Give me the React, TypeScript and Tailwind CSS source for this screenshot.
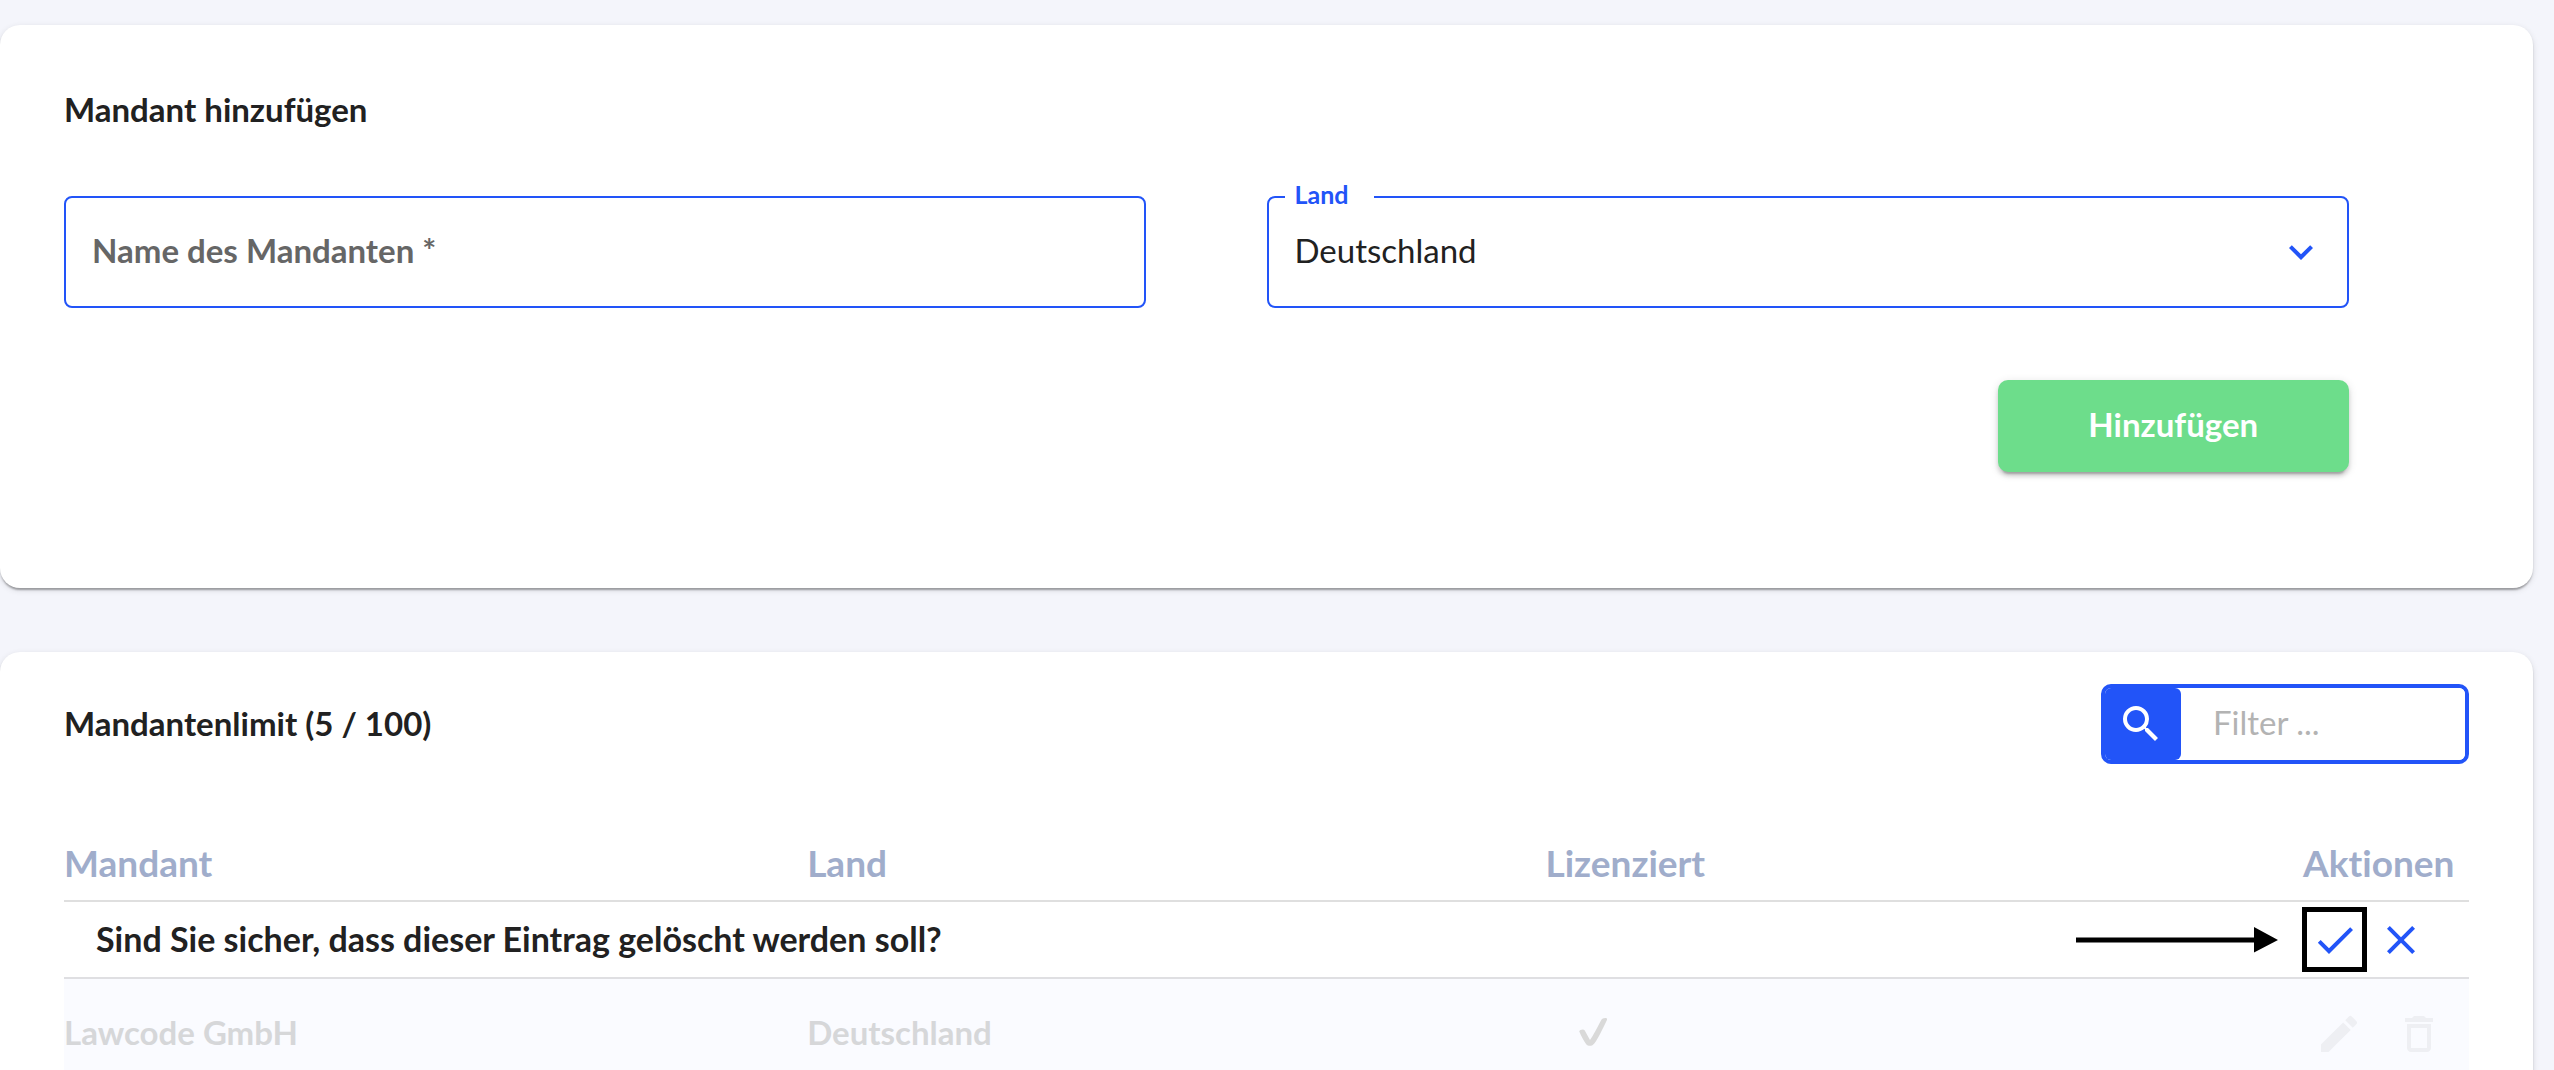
import {
  MdCheck,
  MdClose,
  MdDeleteOutline,
  MdEdit,
  MdKeyboardArrowDown,
  MdSearch,
} from 'react-icons/md';

function AddClientCard() {
  return (
    <section className="rounded-[20px] bg-white px-16 pt-[62px] pb-[116px] shadow-[0_4px_2px_-2px_rgba(0,0,0,0.2),0_2px_2px_0_rgba(0,0,0,0.14),0_2px_6px_0_rgba(0,0,0,0.12)]">
      <h2 className="text-[33px] leading-[44px] font-bold">Mandant hinzufügen</h2>
      <form className="mt-[65px]" onSubmit={(e) => e.preventDefault()}>
        <div className="flex">
          <div className="relative mr-[5%] w-[45%]">
            <input
              id="client-name"
              type="text"
              placeholder=" "
              className="peer block h-28 w-full rounded-lg border-2 border-[#2254f8] bg-white px-[26px] text-[33px] outline-none"
            />
            <label
              htmlFor="client-name"
              className="pointer-events-none absolute inset-y-0 left-7 hidden items-center pb-0.5 text-[33px] font-bold text-[#666666] peer-placeholder-shown:flex"
            >
              Name des Mandanten *
            </label>
          </div>
          <div className="relative w-[45%]">
            <select
              id="client-country"
              className="block h-28 w-full appearance-none rounded-lg border-2 border-[#2254f8] bg-white px-[26px] pb-0.5 text-[33px] outline-none"
              defaultValue="Deutschland"
            >
              <option>Deutschland</option>
              <option>Österreich</option>
              <option>Schweiz</option>
            </select>
            <label
              htmlFor="client-country"
              className="absolute -top-[18px] left-[18px] bg-white pr-[26px] pl-[10px] text-[25px] leading-8 font-bold text-[#2254f8]"
            >
              Land
            </label>
            <MdKeyboardArrowDown className="pointer-events-none absolute top-8 right-6 size-12 text-[#2254f8]" />
          </div>
        </div>
        <div className="mt-[72px] mr-[5%] flex justify-end">
          <button
            type="submit"
            className="h-[92px] w-[351px] rounded-[10px] bg-[#6ddd8b] pb-0.5 text-[33px] font-bold text-white shadow-[0_6px_2px_-4px_rgba(0,0,0,0.2),0_4px_4px_0_rgba(0,0,0,0.14),0_2px_10px_0_rgba(0,0,0,0.12)]"
          >
            Hinzufügen
          </button>
        </div>
      </form>
    </section>
  );
}

function FilterBox() {
  return (
    <div className="flex h-20 w-[368px] overflow-hidden rounded-[10px] border-4 border-[#2254f8] bg-white">
      <label
        htmlFor="filter"
        aria-label="Filter"
        className="flex w-[76px] shrink-0 items-center justify-center rounded-r-md bg-[#2254f8] pr-1 text-white"
      >
        <MdSearch className="size-12" />
      </label>
      <input
        id="filter"
        type="text"
        placeholder="Filter ..."
        className="min-w-0 grow bg-white pb-0.5 pl-8 text-[33px] outline-none placeholder:text-[#b3b3b3] placeholder:opacity-100"
      />
    </div>
  );
}

function PointerArrow() {
  return (
    <svg viewBox="0 0 202 26" className="h-[26px] w-[202px]" aria-hidden="true">
      <path d="M0 10.5h178V0l24 13-24 12.5V15.500H0z" fill="#000" />
    </svg>
  );
}

function LicensedMark() {
  return (
    <svg viewBox="0 0 28 28" className="ml-[34px] size-7" role="img" aria-label="Lizenziert">
      <path
        d="M.3 13.600C-.3 12.300 4.500 10.600 5.600 12.300L11 22C14 18 18.500 9 22 2.500C23.200.2 26-.3 27.800.4C28.400.8 28 2 27.600 2.800C23 12 19.500 20 15.500 25.300C13.500 28.200 9.500 28.800 7.200 26.200C4.500 23 2 17.500.3 13.600z"
        fill="#d9d9d9"
      />
    </svg>
  );
}

function ClientTable() {
  return (
    <table className="mt-[74px] w-full table-fixed border-collapse text-left text-[33px] font-bold">
      <colgroup>
        <col className="w-[30.9%]" />
        <col className="w-[30.7%]" />
        <col className="w-[31.5%]" />
        <col className="w-[6.9%]" />
      </colgroup>
      <thead className="text-[37px] leading-[50px] text-[#a0adcb]">
        <tr className="border-b-2 border-[#dfdfdf]">
          <th className="pb-3">Mandant</th>
          <th className="pb-3">Land</th>
          <th className="pb-3">Lizenziert</th>
          <th className="pb-3">Aktionen</th>
        </tr>
      </thead>
      <tbody>
        <tr className="h-[77px] border-b-2 border-[#dfdfe2]">
          <td colSpan={2} className="pb-0.5 pl-8 text-[34px] whitespace-nowrap">
            Sind Sie sicher, dass dieser Eintrag gelöscht werden soll?
          </td>
          <td colSpan={2}>
            <div className="flex items-center justify-end pr-11">
              <PointerArrow />
              <button
                type="button"
                aria-label="Löschen bestätigen"
                className="ml-6 flex size-[65px] items-center justify-center border-5 border-black text-[#2254f8]"
              >
                <MdCheck className="size-12 shrink-0" />
              </button>
              <button type="button" aria-label="Abbrechen" className="ml-[10px] text-[#2254f8]">
                <MdClose className="size-12" />
              </button>
            </div>
          </td>
        </tr>
        <tr className="h-[110px] bg-[#fafbff] text-[#d6d7d9]">
          <td className="pb-0.5">Lawcode GmbH</td>
          <td className="pb-0.5">Deutschland</td>
          <td className="pb-1">
            <LicensedMark />
          </td>
          <td>
            <div className="flex gap-8 pl-3 text-[#eeeff3]">
              <button type="button" aria-label="Bearbeiten">
                <MdEdit className="size-12" />
              </button>
              <button type="button" aria-label="Löschen">
                <MdDeleteOutline className="size-12" />
              </button>
            </div>
          </td>
        </tr>
      </tbody>
    </table>
  );
}

export default function App() {
  return (
    <main className="flex h-screen flex-col gap-16 overflow-hidden bg-[#f4f5fb] pt-[25px] pr-[21px] font-['Lato',sans-serif] text-[#212121] [font-variant-ligatures:none]">
      <AddClientCard />
      <section className="grow rounded-t-[20px] bg-white px-16 pt-8 shadow-[0_4px_2px_-2px_rgba(0,0,0,0.2),0_2px_2px_0_rgba(0,0,0,0.14),0_2px_6px_0_rgba(0,0,0,0.12)]">
        <header className="flex items-center justify-between">
          <h2 className="pb-0.5 text-[33px] leading-[44px] font-bold">Mandantenlimit (5 / 100)</h2>
          <FilterBox />
        </header>
        <ClientTable />
      </section>
    </main>
  );
}
